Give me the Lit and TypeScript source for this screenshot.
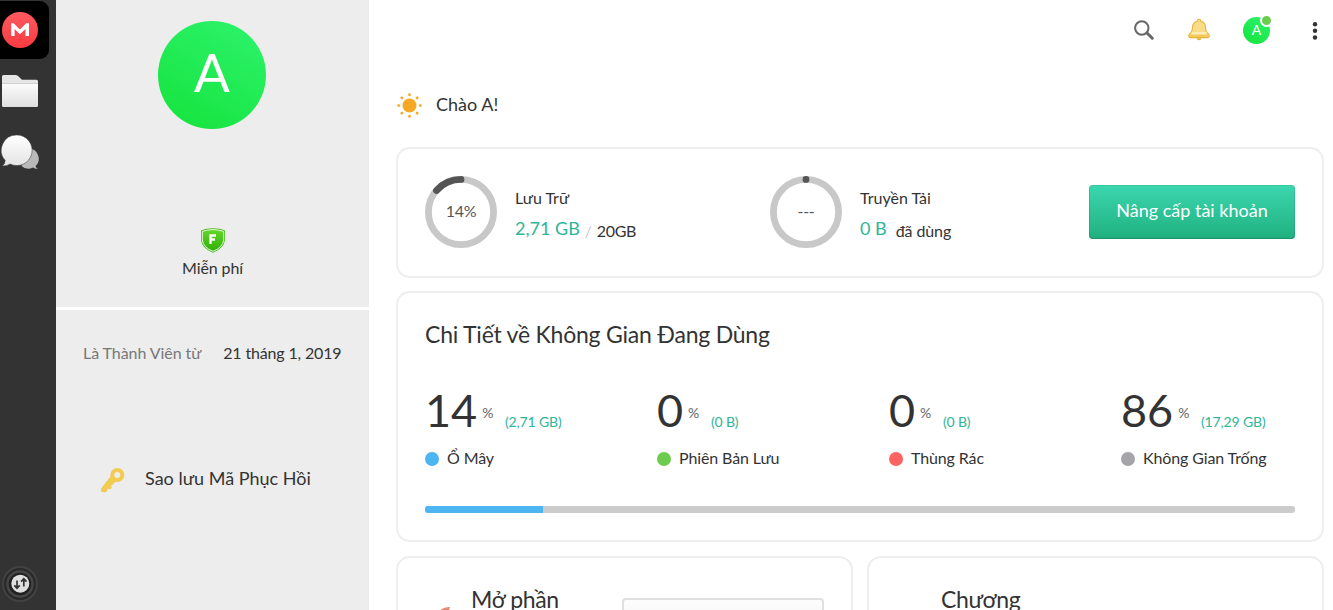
import { LitElement, html, css, svg } from "lit";
import { customElement } from "lit/decorators.js";
import { styleMap } from "lit/directives/style-map.js";

interface Share {
  percent: number;
  size: string;
  label: string;
  color: string;
}

const SHARES: Share[] = [
  { percent: 14, size: "(2,71 GB)", label: "Ổ Mây", color: "#4db5f2" },
  { percent: 0, size: "(0 B)", label: "Phiên Bản Lưu", color: "#6dcb4e" },
  { percent: 0, size: "(0 B)", label: "Thùng Rác", color: "#fd6361" },
  { percent: 86, size: "(17,29 GB)", label: "Không Gian Trống", color: "#a3a3a8" },
];

@customElement("nav-rail")
class NavRail extends LitElement {
  static styles = css`
    :host { display: flex; flex-direction: column; width: 56px; height: 610px; background: #333; flex: none; }
    .home { width: 49px; height: 58px; margin-top: 1px; background: #000; border-radius: 0 9px 9px 0; }
    svg { display: block; }
    .folder { margin-top: 15px; }
    .chat { margin-top: 25px; }
    .transfer { margin-top: auto; margin-bottom: 7px; }
  `;
  render() {
    return html`
      <div class="home">
        <svg width="49" height="58" viewBox="0 1 49 58">
          <defs><linearGradient id="r" x1="0" y1="0" x2="0" y2="1"><stop offset="0" stop-color="#ff5a5e"/><stop offset="1" stop-color="#f93a42"/></linearGradient></defs>
          <circle cx="20" cy="30" r="18" fill="url(#r)"/>
          <path d="M11.200 36V23.300h2.400l6.300 6.200 6.300-6.200H29V36h-3.500v-7L19.900 34.300l-5.300-5.300V36z" fill="#fff"/>
        </svg>
      </div>
      <svg class="folder" width="40" height="34" viewBox="0 74 40 34">
        <defs><linearGradient id="f" x1="0" y1="0" x2="0" y2="1"><stop offset="0" stop-color="#fdfdfd"/><stop offset="1" stop-color="#dedede"/></linearGradient></defs>
        <path d="M2 84V76.500Q2 75 3.500 75H15.500Q17 75 18 76L22 79.700H36.500Q38 79.700 38 81.200V84z" fill="#e6e6e6"/>
        <path d="M2 83.500H38V105.500Q38 107 36.500 107H3.500Q2 107 2 105.500z" fill="url(#f)"/>
        <path d="M2 83.500H38" stroke="#c8c8c8" stroke-width=".8"/>
      </svg>
      <svg class="chat" width="42" height="38" viewBox="0 133 42 38">
        <defs><linearGradient id="c" x1="0" y1="0" x2="0" y2="1"><stop offset="0" stop-color="#fff"/><stop offset="1" stop-color="#e4e4e4"/></linearGradient></defs>
        <path d="M28 148.500a10.200 10.200 0 0 1 7.500 17.600q.3 1.700 2.200 2.700-2.700.3-4.700-1.200a10.200 10.200 0 0 1-11.500-1.600z" fill="#b9b9b9"/>
        <path d="M16.700 135a15.300 15.300 0 1 1-6.700 29q-3 2.300-7.700 1.800 2.700-1.600 2.900-5.300A15.300 15.300 0 0 1 16.700 135z" fill="url(#c)" stroke="#333" stroke-width=".5"/>
      </svg>
      <svg class="transfer" width="40" height="38" viewBox="0 565 40 38">
        <circle cx="20" cy="584" r="17" fill="#292929" stroke="#424242" stroke-width="2"/>
        <circle cx="20" cy="584" r="12.500" fill="#202020" stroke="#464646" stroke-width="2.500"/>
        <circle cx="20.300" cy="583.700" r="9" fill="#dfdfdf"/>
        <path d="M17 580.500v7M14.300 585.300l2.700 2.900 2.700-2.900M23.800 586.500v-7M21.100 581.700l2.700-2.900 2.700 2.900" fill="none" stroke="#333" stroke-width="1.700"/>
      </svg>
    `;
  }
}

@customElement("profile-panel")
class ProfilePanel extends LitElement {
  static styles = css`
    :host { display: flex; flex-direction: column; width: 313px; height: 610px; background: #fff; gap: 3px; flex: none; color: #333; white-space: nowrap; }
    .top { height: 307px; background: #ededed; display: flex; flex-direction: column; align-items: center; }
    .bottom { flex: 1; background: #ededed; }
    .avatar { margin: 21px 1px 0 0; width: 108px; height: 108px; border-radius: 50%; background: linear-gradient(210deg, #2df46d, #15e23b); color: #fff; font-size: 53px; line-height: 101px; text-align: center; }
    .shield { margin-top: 98px; display: block; }
    .plan { margin-top: 2px; font-size: 16px; line-height: 24px; letter-spacing: -.1px; }
    .since { display: flex; gap: 22px; padding: 31px 0 0 27px; font-size: 16px; line-height: 24px; }
    .muted { color: #777; letter-spacing: -.07px; }
    .date { letter-spacing: -.16px; }
    .key { display: flex; align-items: flex-start; gap: 19px; padding: 99px 0 0 44px; font-size: 18px; line-height: 28px; }
    .key svg { margin-top: 3px; }
  `;
  render() {
    return html`
      <div class="top">
        <div class="avatar">A</div>
        <svg class="shield" width="26" height="27" viewBox="0 0 26 27">
          <defs><linearGradient id="s" x1="0" y1="0" x2="0" y2="1"><stop offset="0" stop-color="#65d62a"/><stop offset="1" stop-color="#2eaf06"/></linearGradient></defs>
          <path d="M13 1.300Q20 1.300 25 3.500V13Q24 21.500 13 25.700 2 21.500 1 13V3.500Q6 1.300 13 1.300z" fill="#43bd18"/>
          <path d="M13 2.600Q19 2.600 23.700 4.500V13Q22.800 20.500 13 24.300 3.200 20.500 2.300 13V4.500Q7 2.600 13 2.600z" fill="url(#s)" stroke="#e9f9df" stroke-width="1"/>
          <path d="M10.500 17V8.500H16M10.500 12.500H15" fill="none" stroke="#fff" stroke-width="2.300"/>
        </svg>
        <div class="plan">Miễn phí</div>
      </div>
      <div class="bottom">
        <div class="since"><span class="muted">Là Thành Viên từ</span><span class="date">21 tháng 1, 2019</span></div>
        <div class="key">
          <svg width="26" height="26" viewBox="100 467 26 26">
            <circle cx="117.300" cy="475" r="5" fill="none" stroke="#f3cb51" stroke-width="4"/>
            <path d="M112 474.500l5.500 5.500-6.500 6 .8 1.700-1.800 1.800-2-.9-.8 2.500-1.600 1.200-4-.3-.7-3.200z" fill="#f3cb51"/>
          </svg>
          <span>Sao lưu Mã Phục Hồi</span>
        </div>
      </div>
    `;
  }
}

@customElement("top-bar")
class TopBar extends LitElement {
  static styles = css`
    :host { display: flex; flex: none; justify-content: flex-end; height: 60px; align-items: center; }
    svg { display: block; }
    .bell { margin-left: 32px; }
    .me { position: relative; margin-left: 33px; width: 27px; height: 27px; border-radius: 50%; background: linear-gradient(210deg, #2df46d, #15e23b); color: #fff; font-size: 14px; line-height: 25px; text-align: center; }
    .status { position: absolute; right: -3px; top: -3px; width: 9px; height: 9px; border: 2px solid #fff; border-radius: 50%; background: #6dcb4e; }
    .more { margin: 1px 10px 0 37px; }
  `;
  render() {
    return html`
      <svg width="24" height="24" viewBox="1132 18 24 24"><circle cx="1141.800" cy="28" r="6.700" fill="none" stroke="#666" stroke-width="2"/><path d="M1147 33l5.300 5.200" stroke="#666" stroke-width="3" stroke-linecap="round"/></svg>
      <svg class="bell" width="22" height="24" viewBox="0 0 22 24">
        <path d="M8.500 20.300Q9 22.300 11 22.300T13.500 20.300z" fill="#e3b33c"/>
        <path d="M11 1.200Q12.600 1.200 12.600 3 17.600 4.400 17.600 10 17.600 13.700 19.500 15.200 21.300 16 21.300 18 21.300 19.600 19.700 19.600H2.300Q.7 19.600.7 18 .7 16 2.500 15.200 4.400 13.700 4.400 10 4.400 4.400 9.400 3 9.400 1.200 11 1.200z" fill="#f8dc86" stroke="#e3b33c" stroke-width="1.100"/>
        <path d="M3.500 15.200h15" stroke="#fff0be" stroke-width="2"/><path d="M1.400 17.800h19.200" stroke="#f3ca58" stroke-width="2"/>
      </svg>
      <div class="me">A<span class="status"></span></div>
      <svg class="more" width="16" height="24" viewBox="0 0 16 24" fill="#303233"><circle cx="8" cy="5.300" r="2.200"/><circle cx="8" cy="11.800" r="2.200"/><circle cx="8" cy="18.500" r="2.200"/></svg>
    `;
  }
}

@customElement("app-root")
class AppRoot extends LitElement {
  static styles = css`
    :host { display: flex; width: 1333px; height: 610px; overflow: hidden; background: #fff; font-family: Lato, "Open Sans", sans-serif; color: #333; white-space: nowrap; }
    main { flex: 1; min-width: 0; display: flex; flex-direction: column; }
    .hello { display: flex; flex: none; align-items: center; gap: 13px; height: 28px; margin: 31px 0 28px 27px; font-size: 18px; line-height: 28px; }
    .hello span { margin-top: -2px; }
    .cards { display: grid; flex: none; grid-template-columns: 1fr 1fr; gap: 13px 14px; margin: 0 9px 0 27px; }
    .card { box-sizing: border-box; border: 2px solid #eee; border-radius: 14px; }
    .quota { grid-column: 1 / 3; height: 131px; padding: 0 27px 2px; display: flex; align-items: center; }
    .meter { width: 345px; flex: none; display: flex; align-items: center; gap: 18px; }
    .meter + .meter { width: 319px; }
    .ring { display: grid; width: 72px; height: 72px; place-items: center; }
    .ring svg, .ring span { grid-area: 1 / 1; }
    .ring span { font-size: 16px; line-height: 20px; color: #555; letter-spacing: -.3px; margin-bottom: 2px; }
    .name { font-size: 16px; line-height: 24px; margin-top: 8px; }
    .vals { display: flex; align-items: center; font-size: 16px; line-height: 28px; margin-top: 1px; }
    .vals > :not(.used) { padding-top: 6px; }
    .used { font-size: 18px; color: #2fb597; }
    .slash { color: #aaa; margin: 0 5px; font-weight: 300; }
    .total { letter-spacing: -.3px; }
    .tail { margin-left: 9px; letter-spacing: -.1px; }
    .upgrade { flex: none; box-sizing: border-box; width: 206px; height: 54px; padding: 0; border: 0; border-radius: 4px; background: linear-gradient(#3cd7b0, #20b07e); box-shadow: inset 0 0 0 1px rgba(30, 120, 90, .18), inset 0 -1px 1px rgba(20, 90, 65, .25); color: #fff; font: 18px/28px Lato, sans-serif; padding-bottom: 3px; }
    .detail { grid-column: 1 / 3; height: 251px; padding: 24px 27px 0 27px; }
    h2 { margin: 0; font-size: 23px; line-height: 34px; font-weight: 400; letter-spacing: -.22px; }
    .shares { display: grid; grid-template-columns: repeat(4, 232px); margin-top: 34px; }
    .figure { display: flex; height: 50px; line-height: 50px; align-items: baseline; }
    .num { font-size: 45px; }
    .pct { font-size: 14px; align-self: center; margin: 5px 12px 0 5px; line-height: 20px; color: #666; letter-spacing: -.4px; }
    .size { font-size: 14px; color: #2fb597; letter-spacing: -.15px; }
    .legend { display: flex; align-items: center; gap: 8px; font-size: 16px; line-height: 24px; margin-top: 11px; letter-spacing: -.12px; }
    .dot { width: 14px; height: 14px; margin-top: 2px; border-radius: 50%; }
    .bar { display: flex; height: 7px; margin-top: 36px; border-radius: 3px; overflow: hidden; background: #ccc; }
    .promo { height: 130px; margin-top: 1px; display: flex; align-items: flex-start; font-size: 23px; line-height: 34px; letter-spacing: -.35px; }
    .rocket { margin: 40px 0 0 36px; }
    .promo div { margin-top: 24px; }
    .open { margin-left: 17px; width: 151px; }
    .box { box-sizing: border-box; width: 202px; height: 54px; border: 2px solid #e0e0e0; border-radius: 4px; background: linear-gradient(#fcfcfc, #f2f2f2); }
    .promo .box { margin-top: 40px; }
    .programme { margin-left: 72px; }
  `;

  ring(text: string, share: number) {
    const r = 32.6;
    const length = 2 * Math.PI * r;
    return html`<div class="ring">
      <svg width="72" height="72" viewBox="0 0 72 72">
        <circle cx="36" cy="36" r=${r} fill="none" stroke="#c8c8c8" stroke-width="6.800"/>
        ${svg`<circle cx="36" cy="36" r=${r} fill="none" stroke="#555" stroke-width="6.800" stroke-linecap="round"
          stroke-dasharray="${Math.max(0.01, share * length)} ${length}" transform="matrix(0 -1 -1 0 72 72)"/>`}
      </svg>
      <span>${text}</span>
    </div>`;
  }

  render() {
    return html`
      <nav-rail></nav-rail>
      <profile-panel></profile-panel>
      <main>
        <top-bar></top-bar>
        <div class="hello">
          <svg width="27" height="27" viewBox="0 0 27 27" fill="#f7a823">
            <circle cx="13.500" cy="13.500" r="7"/>
            ${[0, 45, 90, 135, 180, 225, 270, 315].map(
              (a) => svg`<rect x="12.2" y="1.200" width="2.600" height="3" rx="1.200" transform="rotate(${a} 13.5 13.5)"/>`
            )}
          </svg>
          <span>Chào A!</span>
        </div>
        <div class="cards">
          <section class="card quota">
            <div class="meter">${this.ring("14%", 0.135)}
              <div><div class="name">Lưu Trữ</div>
                <div class="vals"><span class="used">2,71 GB</span><span class="slash">/</span><span class="total">20GB</span></div></div>
            </div>
            <div class="meter">${this.ring("---", 0)}
              <div><div class="name">Truyền Tải</div>
                <div class="vals"><span class="used">0 B</span><span class="tail">đã dùng</span></div></div>
            </div>
            <button class="upgrade">Nâng cấp tài khoản</button>
          </section>
          <section class="card detail">
            <h2>Chi Tiết về Không Gian Đang Dùng</h2>
            <div class="shares">
              ${SHARES.map(
                (s) => html`<div>
                  <div class="figure"><span class="num">${s.percent}</span><span class="pct">%</span><span class="size">${s.size}</span></div>
                  <div class="legend"><span class="dot" style=${styleMap({ background: s.color })}></span><span>${s.label}</span></div>
                </div>`
              )}
            </div>
            <div class="bar"><span style=${styleMap({ width: "13.55%", background: SHARES[0].color })}></span></div>
          </section>
          <section class="card promo">
            <svg class="rocket" width="20" height="30" viewBox="434 598 20 30"><path d="M441 609.500q4-3 9-2.500l-2 8-9-1z" fill="#e58a78"/></svg>
            <div class="open">Mở phần</div>
            <div class="box"></div>
          </section>
          <section class="card promo"><div class="programme">Chương</div></section>
        </div>
      </main>
    `;
  }
}
